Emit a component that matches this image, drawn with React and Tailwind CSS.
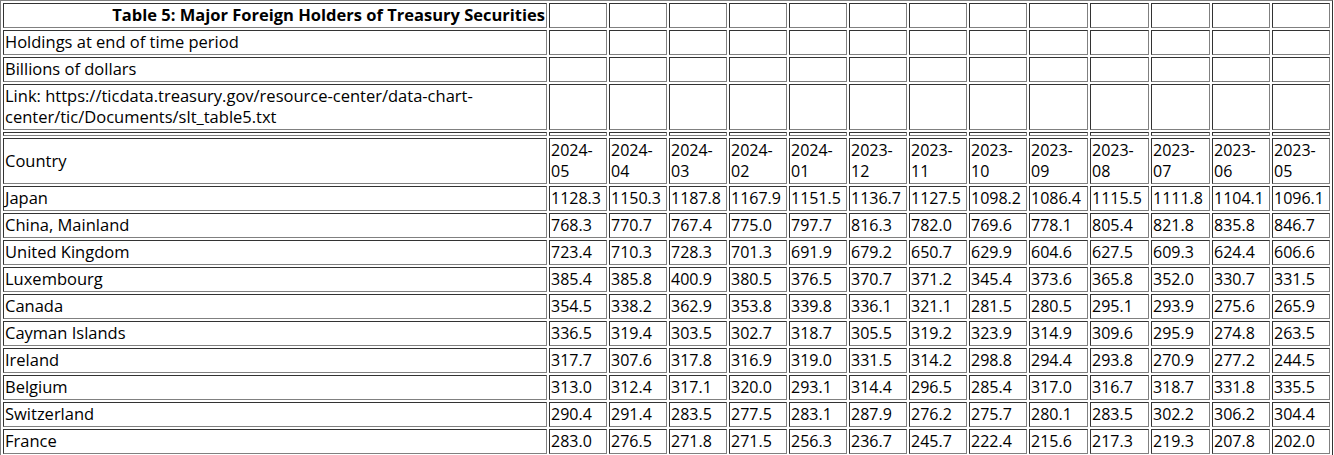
const months = ["2024-05","2024-04","2024-03","2024-02","2024-01","2023-12","2023-11","2023-10","2023-09","2023-08","2023-07","2023-06","2023-05"];

const rows = [
  ["Japan", "1128.3 1150.3 1187.8 1167.9 1151.5 1136.7 1127.5 1098.2 1086.4 1115.5 1111.8 1104.1 1096.1"],
  ["China, Mainland", "768.3 770.7 767.4 775.0 797.7 816.3 782.0 769.6 778.1 805.4 821.8 835.8 846.7"],
  ["United Kingdom", "723.4 710.3 728.3 701.3 691.9 679.2 650.7 629.9 604.6 627.5 609.3 624.4 606.6"],
  ["Luxembourg", "385.4 385.8 400.9 380.5 376.5 370.7 371.2 345.4 373.6 365.8 352.0 330.7 331.5"],
  ["Canada", "354.5 338.2 362.9 353.8 339.8 336.1 321.1 281.5 280.5 295.1 293.9 275.6 265.9"],
  ["Cayman Islands", "336.5 319.4 303.5 302.7 318.7 305.5 319.2 323.9 314.9 309.6 295.9 274.8 263.5"],
  ["Ireland", "317.7 307.6 317.8 316.9 319.0 331.5 314.2 298.8 294.4 293.8 270.9 277.2 244.5"],
  ["Belgium", "313.0 312.4 317.1 320.0 293.1 314.4 296.5 285.4 317.0 316.7 318.7 331.8 335.5"],
  ["Switzerland", "290.4 291.4 283.5 277.5 283.1 287.9 276.2 275.7 280.1 283.5 302.2 306.2 304.4"],
  ["France", "283.0 276.5 271.8 271.5 256.3 236.7 245.7 222.4 215.6 217.3 219.3 207.8 202.0"],
];

const colW = ["w-[58px]","w-[58px]","w-[58px]","w-[58px]","w-[58px]","w-[58px]","w-[58px]","w-[58px]","w-[59px]","w-[59px]","w-[59px]","w-[58px]","w-[58px]"];

const base = "border border-t-[#333333] border-l-[#333333] border-r-[#808080] border-b-[#808080] align-middle text-left font-normal";
const cell = `${base} p-px`;
const label = `${base} px-px pt-0 pb-[2px] text-[16.5px]`;

function EmptyCells({ widths }) {
  return months.map((m, i) => (
    <td key={m} className={`${cell} ${widths ? widths[i] : ""}`}></td>
  ));
}

export default function App() {
  return (
    <div className="bg-white text-black text-[16px] leading-[21px]" style={{ fontFamily: '"Open Sans", "Noto Sans", sans-serif' }}>
      <table className="table-fixed w-[1333px] border-separate border-spacing-[2px] border border-t-[#808080] border-l-[#808080] border-r-[#333333] border-b-[#333333]">
        <tbody>
          <tr>
            <th className={`${label} w-[544px] !text-right !font-bold`}>Table 5: Major Foreign Holders of Treasury Securities</th>
            <EmptyCells widths={colW} />
          </tr>
          <tr>
            <td className={label}>Holdings at end of time period</td>
            <EmptyCells />
          </tr>
          <tr>
            <td className={label}>Billions of dollars</td>
            <EmptyCells />
          </tr>
          <tr>
            <td className={label}>Link: https://ticdata.treasury.gov/resource-center/data-chart-center/tic/Documents/slt_table5.txt</td>
            <EmptyCells />
          </tr>
          <tr>
            <td className={cell}></td>
            <EmptyCells />
          </tr>
          <tr>
            <td className={label}>Country</td>
            {months.map((m) => (
              <td key={m} className={cell}>{m}</td>
            ))}
          </tr>
          {rows.map(([name, vals]) => (
            <tr key={name}>
              <td className={label}>{name}</td>
              {vals.split(" ").map((v, i) => (
                <td key={i} className={`${cell} whitespace-nowrap`}>{v}</td>
              ))}
            </tr>
          ))}
        </tbody>
      </table>
    </div>
  );
}
